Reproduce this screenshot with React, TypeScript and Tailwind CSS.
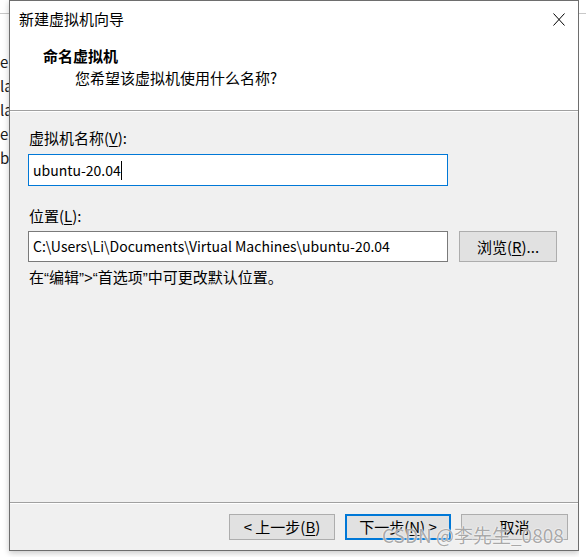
import React from 'react';

const font = { fontFamily: '"Noto Sans CJK SC", "Noto Sans", sans-serif' };
const latin = { fontFamily: '"Liberation Sans", sans-serif' };

const Key: React.FC<{ k: string }> = ({ k }) => (
  <span className="underline underline-offset-2 decoration-1">{k}</span>
);

const WinButton: React.FC<{ children: React.ReactNode; primary?: boolean; className?: string }> = ({
  children,
  primary,
  className,
}) => (
  <div
    className={
      'flex items-center justify-center bg-[#e1e1e1] text-[15px] leading-[20px] text-black ' +
      (primary ? 'border-2 border-[#0078d7] ' : 'border border-[#adadad] ') +
      (className ?? '')
    }
  >
    {children}
  </div>
);

const App: React.FC = () => {
  return (
    <div className="relative flex w-[586px] h-[557px] bg-white overflow-hidden" style={font}>
      {/* window behind, left edge */}
      <div className="w-[9px] shrink-0 overflow-hidden bg-white">
        <div className="mt-[13px] h-px bg-[#c8c8c8]" />
        <div className="pt-[36px] text-[15px] leading-[24px] text-[#1a1a1a] whitespace-nowrap">
          <div>e</div>
          <div>la</div>
          <div>la</div>
          <div>e</div>
          <div>b</div>
        </div>
      </div>

      {/* dialog */}
      <div className="flex flex-col w-[570px] h-[551px] shrink-0 border border-[#6e6e6e] bg-[#f0f0f0] shadow-[0_2px_6px_rgba(0,0,0,0.22)]">
        <div className="h-[110px] bg-white border-b border-[#a0a0a0]">
          <div className="flex items-center justify-between h-[20px] mt-[8px] pl-[9px] pr-[13px]">
            <span className="text-[15px] leading-[20px] text-black">新建虚拟机向导</span>
            <svg width="12" height="13" viewBox="0 0 12 13" className="block">
              <path d="M0.5 0.5 L11.5 12.5 M11.5 0.5 L0.5 12.5" stroke="#000" strokeWidth="1" fill="none" />
            </svg>
          </div>
          <div className="mt-[17px] pl-[33px] text-[15px] leading-[20px] font-bold text-black">命名虚拟机</div>
          <div className="mt-[2px] pl-[65px] text-[15px] leading-[20px] text-black">您希望该虚拟机使用什么名称?</div>
        </div>

        <div className="flex flex-col flex-1 border-t border-white">
          <div className="flex-1 pl-[18px]">
            <div className="mt-[16px] pl-[1px] text-[15px] leading-[20px] text-black">
              虚拟机名称(<Key k="V" />):
            </div>
            <div className="mt-[6px] flex items-center w-[420px] h-[32px] bg-white border border-[#0078d7] pl-[4px] text-[14px] text-black">
              <span>ubuntu-20.04</span>
              <span className="inline-block w-px h-[19px] bg-black" />
            </div>
            <div className="mt-[20px] pl-[1px] text-[15px] leading-[20px] text-black">
              位置(<Key k="L" />):
            </div>
            <div className="mt-[5px] flex items-center gap-[11px]">
              <div className="flex items-center w-[420px] h-[31px] bg-white border border-[#7a7a7a] pl-[4px] text-[14px] text-black whitespace-nowrap overflow-hidden">
                C:\Users\Li\Documents\Virtual Machines\ubuntu-20.04
              </div>
              <WinButton className="w-[98px] h-[31px]">
                浏览(<Key k="R" />)...
              </WinButton>
            </div>
            <div className="mt-[5px] pl-[1px] text-[15px] leading-[20px] text-black">
              在<span style={latin}>“</span>编辑<span style={latin}>”&gt;“</span>首选项
              <span style={latin}>”</span>中可更改默认位置。
            </div>
          </div>

          <div className="border-t border-[#a0a0a0]">
            <div className="border-t border-white flex justify-end gap-[10px] pt-[10px] pb-[10px] pr-[10px]">
              <WinButton className="w-[106px] h-[26px]">
                &lt; 上一步(<Key k="B" />)
              </WinButton>
              <WinButton primary className="w-[106px] h-[26px]">
                下一步(<Key k="N" />) &gt;
              </WinButton>
              <WinButton className="w-[107px] h-[26px]">取消</WinButton>
            </div>
          </div>
        </div>
      </div>

      {/* window behind, right edge */}
      <div className="flex-1 bg-white">
        <div className="mt-[13px] h-px bg-[#c8c8c8]" />
      </div>

      {/* watermark */}
      <div
        className="absolute left-[382px] top-[523px] text-[19px] leading-[24px] text-[rgba(140,140,140,0.75)] whitespace-nowrap pointer-events-none"
        style={{ textShadow: '0 0 2px #fff, 0 0 1px #fff' }}
      >
        CSDN @李先生_0808
      </div>
    </div>
  );
};

export default App;
